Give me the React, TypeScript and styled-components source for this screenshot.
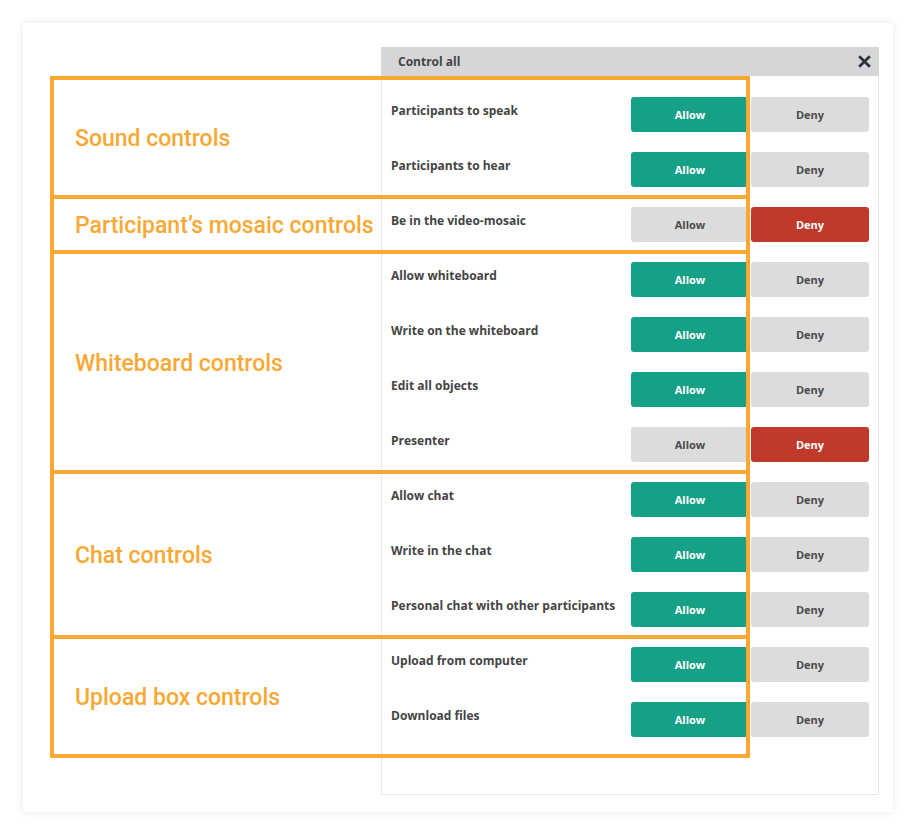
import React from "react";
import styled, { createGlobalStyle } from "styled-components";

type Mode = "allow" | "deny";

type IRow = { label: string; mode: Mode };
type IGroup = { title: string; rows: IRow[] };

const groups: IGroup[] = [
  {
    title: "Sound controls",
    rows: [
      { label: "Participants to speak", mode: "allow" },
      { label: "Participants to hear", mode: "allow" },
    ],
  },
  {
    title: "Participant’s mosaic controls",
    rows: [{ label: "Be in the video-mosaic", mode: "deny" }],
  },
  {
    title: "Whiteboard controls",
    rows: [
      { label: "Allow whiteboard", mode: "allow" },
      { label: "Write on the whiteboard", mode: "allow" },
      { label: "Edit all objects", mode: "allow" },
      { label: "Presenter", mode: "deny" },
    ],
  },
  {
    title: "Chat controls",
    rows: [
      { label: "Allow chat", mode: "allow" },
      { label: "Write in the chat", mode: "allow" },
      { label: "Personal chat with other participants", mode: "allow" },
    ],
  },
  {
    title: "Upload box controls",
    rows: [
      { label: "Upload from computer", mode: "allow" },
      { label: "Download files", mode: "allow" },
    ],
  },
];

const GlobalStyle = createGlobalStyle`
  body {
    margin: 0;
    background: #ffffff;
    font-family: "Open Sans", "Liberation Sans", sans-serif;
  }
`;

const Card = styled.div`
  width: 870px;
  height: 789px;
  box-sizing: border-box;
  margin: 23px;
  padding-top: 24px;
  background: #ffffff;
  box-shadow: 0 0 8px rgba(0, 0, 0, 0.09);
  display: flex;
  flex-direction: column;
`;

const Line = styled.div`
  display: grid;
  grid-template-columns: 358px 498px;
  position: relative;
`;

const PanelHeader = styled.div`
  height: 29px;
  background: #d6d6d6;
  display: flex;
  align-items: center;
  justify-content: space-between;
  padding: 0 8px 0 17px;
  font-size: 12px;
  font-weight: 700;
  color: #444;
`;

const Close = styled.span`
  display: flex;
  width: 13px;
  height: 13px;
`;

const Group = styled(Line)<{ $padTop?: number; $padBottom?: number }>`
  &::after {
    content: "";
    position: absolute;
    left: 27px;
    top: 0;
    width: 700px;
    height: calc(100% + 4px);
    box-sizing: border-box;
    border: 4px solid #f9a834;
    pointer-events: none;
    z-index: 2;
  }

  & > div:last-child {
    padding-top: ${(p) => p.$padTop ?? 0}px;
    padding-bottom: ${(p) => p.$padBottom ?? 0}px;
  }
`;

const GroupTitle = styled.div`
  display: flex;
  align-items: center;
  padding-left: 52px;
  padding-top: 6px;
  font-family: Roboto, "Liberation Sans", sans-serif;
  font-size: 23px;
  font-weight: 500;
  color: #f9a834;
  white-space: nowrap;
`;

const PanelBody = styled.div`
  border-left: 1px solid #e6e6e6;
  border-right: 1px solid #e6e6e6;
  background: #ffffff;
`;

const PanelFooter = styled(PanelBody)`
  height: 40px;
  border-bottom: 1px solid #e6e6e6;
`;

const Row = styled.div`
  height: 55px;
  box-sizing: border-box;
  padding: 12px 9px 0 9px;
  display: flex;
  align-items: flex-start;
`;

const RowLabel = styled.div`
  flex: 1;
  padding-top: 5px;
  line-height: 18px;
  font-size: 12px;
  font-weight: 700;
  color: #444;
  white-space: nowrap;
`;

const Buttons = styled.div`
  display: flex;
  gap: 2px;
`;

const Choice = styled.button<{ $on: boolean; $tone: "allow" | "deny" }>`
  width: 118px;
  height: 35px;
  border: none;
  border-radius: 3px;
  font-family: "Open Sans", "Liberation Sans", sans-serif;
  font-size: 11px;
  font-weight: 700;
  cursor: pointer;
  background: ${(p) =>
    p.$on ? (p.$tone === "allow" ? "#16a085" : "#c0392b") : "#dcdcdc"};
  color: ${(p) => (p.$on ? "#ffffff" : "#4a4a4a")};
`;

const CloseIcon = () => (
  <svg viewBox="0 0 12 12" width="13" height="13">
    <path d="M2 2 L10 10 M10 2 L2 10" stroke="#2f3640" strokeWidth="2.6" strokeLinecap="square" />
  </svg>
);

export default function App() {
  return (
    <>
      <GlobalStyle />
      <Card>
        <Line>
          <div />
          <PanelHeader>
            Control all
            <Close>
              <CloseIcon />
            </Close>
          </PanelHeader>
        </Line>
        {groups.map((g, i) => (
          <Group
            key={g.title}
            $padTop={i === 0 ? 9 : 0}
            $padBottom={i === groups.length - 1 ? 9 : 0}
          >
            <GroupTitle>{g.title}</GroupTitle>
            <PanelBody>
              {g.rows.map((r) => (
                <Row key={r.label}>
                  <RowLabel>{r.label}</RowLabel>
                  <Buttons>
                    <Choice $tone="allow" $on={r.mode === "allow"}>
                      Allow
                    </Choice>
                    <Choice $tone="deny" $on={r.mode === "deny"}>
                      Deny
                    </Choice>
                  </Buttons>
                </Row>
              ))}
            </PanelBody>
          </Group>
        ))}
        <Line>
          <div />
          <PanelFooter />
        </Line>
      </Card>
    </>
  );
}
